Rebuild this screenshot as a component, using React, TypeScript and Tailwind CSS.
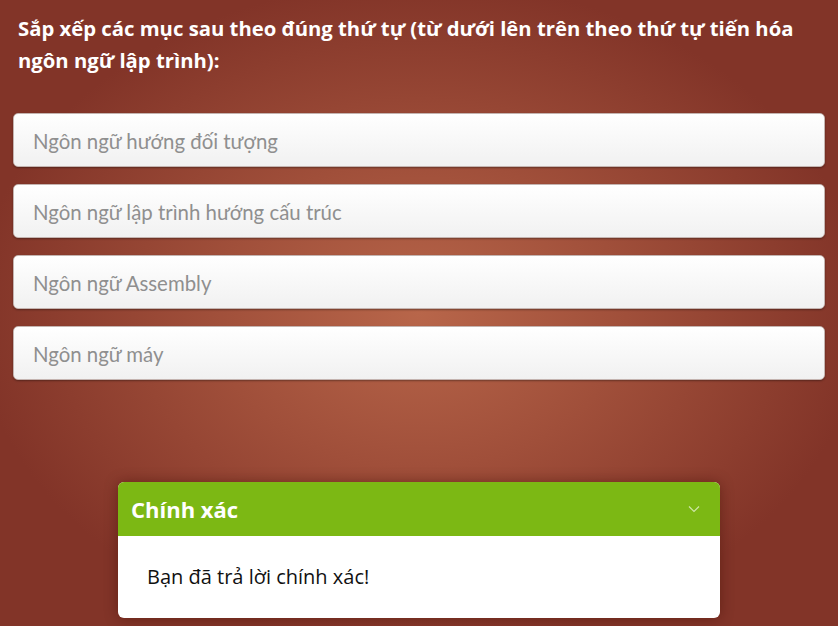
import React from "react";

const items = [
  "Ngôn ngữ hướng đối tượng",
  "Ngôn ngữ lập trình hướng cấu trúc",
  "Ngôn ngữ Assembly",
  "Ngôn ngữ máy",
];

export default function App() {
  return (
    <div className="w-full h-[626px] overflow-hidden bg-[radial-gradient(ellipse_at_50%_50%,#b8664a_0%,#a04f3a_35%,#823428_75%)] font-['Open_Sans',sans-serif]">
      <h1 className="pt-[12px] pl-[18px] pr-[20px] text-[20.3px] leading-[32px] font-bold text-white">
        Sắp xếp các mục sau theo đúng thứ tự (từ dưới lên trên theo thứ tự tiến hóa ngôn ngữ lập trình):
      </h1>
      <div className="mt-[37px] mx-[13px] flex flex-col gap-[17px]">
        {items.map((t) => (
          <div
            key={t}
            className="h-[54px] rounded-[5px] border border-[#c4b4b0] bg-gradient-to-b from-white to-[#f1f1f1] shadow-[0_1px_2px_rgba(0,0,0,0.35)] flex items-center pl-[19px] pt-[2px] font-['Lato',sans-serif] text-[20.4px] text-[#8f8f8f]"
          >
            {t}
          </div>
        ))}
      </div>
      <div className="mt-[102px] mx-auto w-[602px] rounded-[6px] overflow-hidden bg-white shadow-[0_0_14px_rgba(60,10,0,0.45)]">
        <div className="h-[54px] bg-[#7cb814] flex items-center justify-between pl-[13px] pr-[20px]">
          <span className="text-[22px] font-bold text-white">Chính xác</span>
          <svg width="12" height="8" viewBox="0 0 12 8" fill="none">
            <path d="M1 1.5 L6 6.5 L11 1.5" stroke="#cfe6a8" strokeWidth="1.2" />
          </svg>
        </div>
        <div className="h-[82px] flex items-center pl-[29px] text-[20px] text-[#111]">
          Bạn đã trả lời chính xác!
        </div>
      </div>
    </div>
  );
}
